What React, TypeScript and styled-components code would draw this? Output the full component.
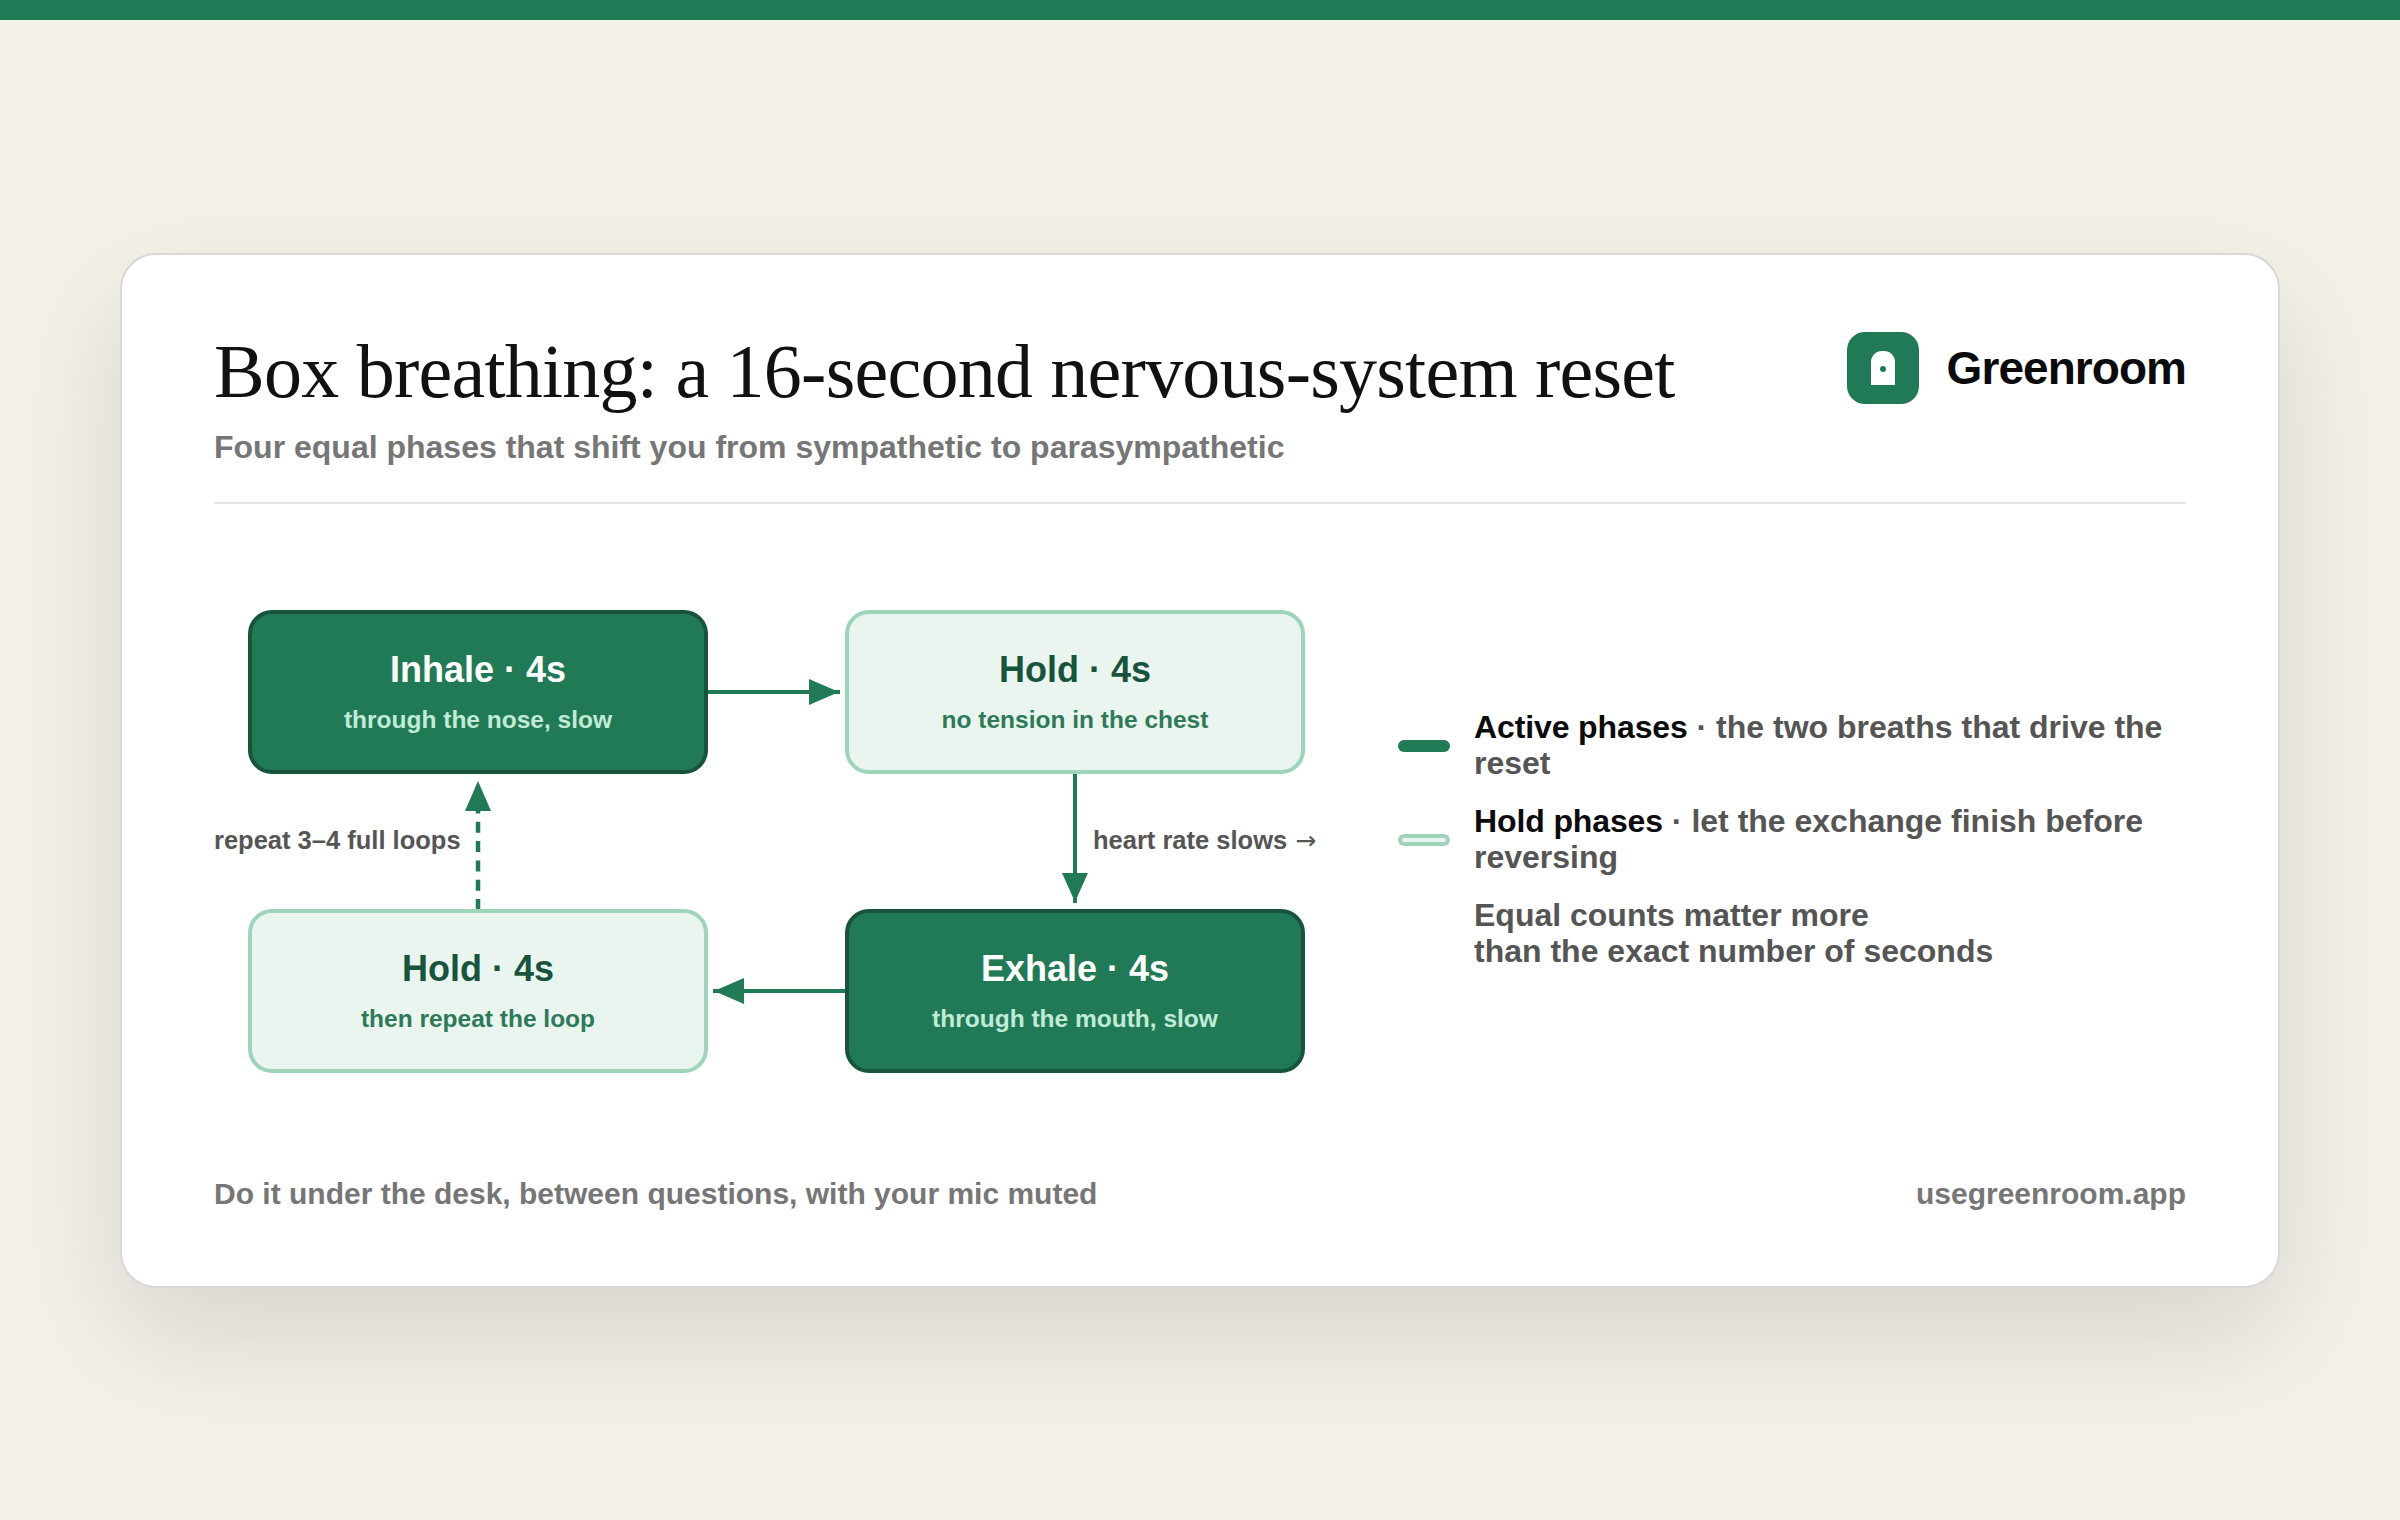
import React from "react";
import styled, { createGlobalStyle } from "styled-components";

const GlobalStyle = createGlobalStyle`
  html, body { margin: 0; padding: 0; background: #f4f1e9; }
  * { box-sizing: border-box; }
  body { font-family: "Liberation Sans", Arial, sans-serif; }
`;

const GREEN = "#207a55";
const DARK = "#17543b";
const MINT = "#9dd4ba";
const PALE = "#eaf5ef";

const Page = styled.div`
  width: 2400px;
  height: 1520px;
  display: flex;
  flex-direction: column;
  overflow: hidden;
  background: #f4f1e9;
`;
const TopBar = styled.div`
  height: 20px;
  flex: none;
  background: ${GREEN};
`;
const Stage = styled.main`
  flex: 1;
  display: flex;
  align-items: center;
  justify-content: center;
`;
const Card = styled.section`
  width: 2160px;
  height: 1035px;
  padding: 0 92px;
  background: #fff;
  border: 2px solid #d8d8d5;
  border-radius: 36px;
  box-shadow: 0 48px 120px rgba(0, 0, 0, 0.12);
  display: flex;
  flex-direction: column;
`;
const Header = styled.header`
  height: 249px;
  padding-top: 74px;
  border-bottom: 2px solid #e6e6e6;
  display: flex;
  justify-content: space-between;
  align-items: flex-start;
`;
const Titles = styled.div`
  display: flex;
  flex-direction: column;
`;
const Title = styled.h1`
  margin: 0;
  font-family: "Liberation Serif", "Times New Roman", serif;
  font-weight: 400;
  font-size: 76px;
  line-height: 84px;
  letter-spacing: -0.76px;
  color: #111;
  white-space: nowrap;
`;
const Subtitle = styled.p`
  margin: 14px 0 0;
  font-size: 32px;
  line-height: 40px;
  font-weight: 700;
  color: #767676;
  white-space: nowrap;
`;
const Brand = styled.div`
  display: flex;
  align-items: center;
  gap: 28px;
  margin-top: 3px;
`;
const LogoMark = styled.svg`
  width: 72px;
  height: 72px;
  flex: none;
  display: block;
`;
const BrandName = styled.span`
  font-size: 46px;
  line-height: 56px;
  font-weight: 700;
  letter-spacing: -0.95px;
  color: #0b0b0b;
`;
const Main = styled.div`
  flex: 1;
  display: flex;
  align-items: flex-start;
`;
const Diagram = styled.div`
  margin-top: 106.5px;
  flex: none;
  display: grid;
  grid-template-columns: 34px 460px 137px 460px;
  grid-template-rows: 164px 135px 164px;
`;
const Box = styled.div<{ $active?: boolean; $col: number }>`
  grid-column: ${(p) => p.$col};
  display: flex;
  flex-direction: column;
  align-items: center;
  justify-content: center;
  border-radius: 24px;
  border: 4px solid ${(p) => (p.$active ? DARK : MINT)};
  background: ${(p) => (p.$active ? GREEN : PALE)};
`;
const BoxTitle = styled.div<{ $active?: boolean }>`
  font-size: 36px;
  line-height: 44px;
  font-weight: 700;
  color: ${(p) => (p.$active ? "#fff" : DARK)};
`;
const BoxSub = styled.div<{ $active?: boolean }>`
  margin-top: 12px;
  font-size: 24.5px;
  line-height: 32px;
  font-weight: 700;
  color: ${(p) => (p.$active ? "#c2ebd7" : "#2d7a59")};
`;
const HConnector = styled.svg<{ $col: number }>`
  grid-column: ${(p) => p.$col};
  width: 137px;
  height: 164px;
  display: block;
`;
const LoopGap = styled.div`
  grid-column: 1 / span 2;
  display: grid;
  grid-template-columns: 246px 36px;
  align-items: center;
`;
const ForwardGap = styled.div`
  grid-column: 4;
  display: flex;
  align-items: center;
  padding-left: 212px;
`;
const VConnector = styled.svg`
  width: 36px;
  height: 135px;
  flex: none;
  display: block;
`;
const FlowLabel = styled.span`
  padding-bottom: 3px;
  font-size: 25.5px;
  line-height: 32px;
  font-weight: 700;
  color: #555;
  white-space: nowrap;
`;
const ArrowGlyph = styled.span`
  margin-left: 1px;
  font-family: "DejaVu Sans", sans-serif;
  font-size: 25px;
  font-weight: 400;
`;
const Legend = styled.div`
  margin: 205px 0 0 93px;
  width: 788px;
  display: flex;
  flex-direction: column;
  gap: 22px;
`;
const LegendRow = styled.div`
  display: grid;
  grid-template-columns: 52px 1fr;
  column-gap: 24px;
  align-items: center;
`;
const Swatch = styled.span<{ $active?: boolean }>`
  display: block;
  height: 12px;
  margin-top: 2px;
  border-radius: 6px;
  background: ${(p) => (p.$active ? GREEN : PALE)};
  border: ${(p) => (p.$active ? "0" : `4px solid ${MINT}`)};
`;
const LegendText = styled.div`
  grid-column: 2;
  font-size: 32px;
  line-height: 36px;
  font-weight: 700;
  color: #555;
`;
const Strong = styled.strong`
  font-weight: 700;
  letter-spacing: -0.12px;
  color: #0b0b0b;
`;
const Footer = styled.footer`
  height: 110px;
  display: flex;
  justify-content: space-between;
  font-size: 30px;
  line-height: 36px;
  font-weight: 700;
  color: #767676;
`;

const boxes = {
  inhale: { t: "Inhale · 4s", s: "through the nose, slow" },
  holdA: { t: "Hold · 4s", s: "no tension in the chest" },
  exhale: { t: "Exhale · 4s", s: "through the mouth, slow" },
  holdB: { t: "Hold · 4s", s: "then repeat the loop" },
};

const Phase = ({ col, active, t, s }: { col: number; active?: boolean; t: string; s: string }) => (
  <Box $col={col} $active={active}>
    <BoxTitle $active={active}>{t}</BoxTitle>
    <BoxSub $active={active}>{s}</BoxSub>
  </Box>
);

export default function App() {
  return (
    <>
      <GlobalStyle />
      <Page>
        <TopBar />
        <Stage>
          <Card>
            <Header>
              <Titles>
                <Title>Box breathing: a 16-second nervous-system reset</Title>
                <Subtitle>Four equal phases that shift you from sympathetic to parasympathetic</Subtitle>
              </Titles>
              <Brand>
                <LogoMark viewBox="0 0 72 72" aria-hidden="true">
                  <rect width="72" height="72" rx="18" fill={GREEN} />
                  <path d="M24 53V30a11 11 0 0 1 11-11h2a11 11 0 0 1 11 11v23z" fill="#fff" />
                  <circle cx="36" cy="37" r="3" fill={GREEN} />
                </LogoMark>
                <BrandName>Greenroom</BrandName>
              </Brand>
            </Header>
            <Main>
              <Diagram>
                <Phase col={2} active {...boxes.inhale} />
                <HConnector $col={3} viewBox="0 0 137 164" aria-hidden="true">
                  <line x1="0" y1="82" x2="132" y2="82" stroke={GREEN} strokeWidth="4" />
                  <path d="M101 69L131 82L101 95z" fill={GREEN} />
                </HConnector>
                <Phase col={4} {...boxes.holdA} />
                <LoopGap>
                  <FlowLabel>repeat 3–4 full loops</FlowLabel>
                  <VConnector viewBox="0 0 36 135" aria-hidden="true">
                    <line x1="18" y1="136" x2="18" y2="37" stroke={GREEN} strokeWidth="4.5" strokeDasharray="11 8.3" />
                    <path d="M5 37L18 7L31 37z" fill={GREEN} />
                  </VConnector>
                </LoopGap>
                <ForwardGap>
                  <VConnector viewBox="0 0 36 135" aria-hidden="true">
                    <line x1="18" y1="0" x2="18" y2="129" stroke={GREEN} strokeWidth="4" />
                    <path d="M5 99L18 128L31 99z" fill={GREEN} />
                  </VConnector>
                  <FlowLabel>heart rate slows <ArrowGlyph>→</ArrowGlyph></FlowLabel>
                </ForwardGap>
                <Phase col={2} {...boxes.holdB} />
                <HConnector $col={3} viewBox="0 0 137 164" aria-hidden="true">
                  <line x1="137" y1="82" x2="5" y2="82" stroke={GREEN} strokeWidth="4" />
                  <path d="M36 69L6 82L36 95z" fill={GREEN} />
                </HConnector>
                <Phase col={4} active {...boxes.exhale} />
              </Diagram>
              <Legend>
                <LegendRow>
                  <Swatch $active />
                  <LegendText><Strong>Active phases</Strong> · the two breaths that drive the reset</LegendText>
                </LegendRow>
                <LegendRow>
                  <Swatch />
                  <LegendText><Strong>Hold phases</Strong> · let the exchange finish before reversing</LegendText>
                </LegendRow>
                <LegendRow>
                  <LegendText>Equal counts matter more<br />than the exact number of seconds</LegendText>
                </LegendRow>
              </Legend>
            </Main>
            <Footer>
              <span>Do it under the desk, between questions, with your mic muted</span>
              <span>usegreenroom.app</span>
            </Footer>
          </Card>
        </Stage>
      </Page>
    </>
  );
}
